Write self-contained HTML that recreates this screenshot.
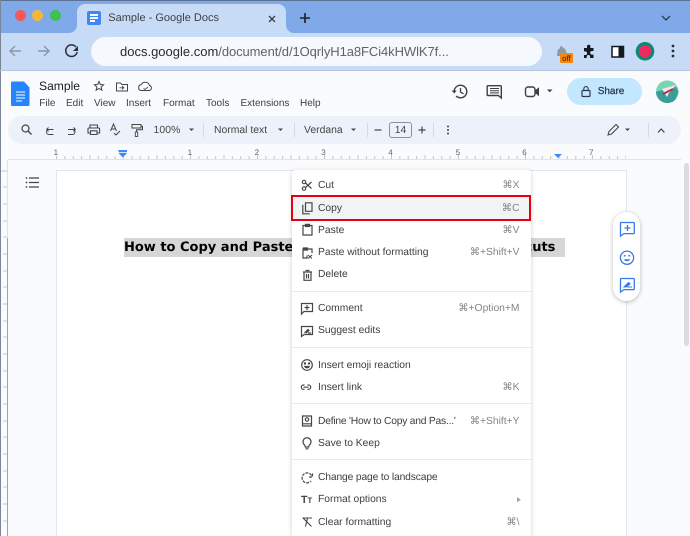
<!DOCTYPE html>
<html><head><meta charset="utf-8"><style>
html,body{margin:0;padding:0}
body{width:690px;height:536px;overflow:hidden;position:relative;background:#f9fbfd;font-family:"Liberation Sans",sans-serif;color:#202124;text-rendering:geometricPrecision}
#w{position:absolute;left:0;top:0;width:690px;height:536px;overflow:hidden;filter:blur(.3px)}
.a{position:absolute}
.t{position:absolute;white-space:nowrap}
svg{position:absolute;overflow:visible;left:0;top:0}
.m{position:absolute;left:318px;font-size:10.3px;color:#3c4043;white-space:nowrap;line-height:14px;margin-top:1.3px}
.k{position:absolute;right:170.5px;font-size:10.3px;color:#80868b;white-space:nowrap;line-height:14px;margin-top:1.3px}
.s{position:absolute;left:292px;width:239px;height:1px;background:#e8eaed}
.mi{fill:none;stroke:#444746;stroke-width:1.2}
.b{position:absolute;top:96.5px;font-size:10px;line-height:13px;color:#3c4043;white-space:nowrap}
.n{position:absolute;top:148px;font-size:8px;color:#5f6368}
.tb{position:absolute;z-index:1;top:124px;font-size:10.4px;line-height:14px;color:#444746;white-space:nowrap}
</style></head><body><div id="w">
<!-- tab strip -->
<div class="a" style="left:0;top:0;width:690px;height:33px;background:#7fa9e8"></div>
<div class="a" style="left:0;top:0;width:690px;height:1px;background:#5c7192"></div>
<div class="a" style="left:0;top:33px;width:690px;height:37px;background:#c8dbf6"></div>
<div class="a" style="left:0;top:0;width:1px;height:536px;background:#7a8598"></div>
<div class="a" style="left:77px;top:4px;width:209px;height:29px;background:#c8dbf6;border-radius:8px 8px 0 0"></div>
<div class="a" style="left:15px;top:10px;width:11px;height:11px;border-radius:50%;background:#f15a57"></div>
<div class="a" style="left:32px;top:10px;width:11px;height:11px;border-radius:50%;background:#f6b738"></div>
<div class="a" style="left:50px;top:10px;width:11px;height:11px;border-radius:50%;background:#3cc24f"></div>
<div class="a" style="left:87px;top:11px;width:14px;height:14px;border-radius:2px;background:#4285f4"></div>
<div class="a" style="left:90px;top:14px;width:8px;height:1.5px;background:#fff"></div>
<div class="a" style="left:90px;top:17px;width:8px;height:1.5px;background:#fff"></div>
<div class="a" style="left:90px;top:20px;width:5px;height:1.5px;background:#fff"></div>
<div class="t" style="left:108.3px;top:11px;font-size:11px;line-height:14px;color:#3c4043">Sample - Google Docs</div>
<svg width="690" height="70">
<path d="M69 33a8 8 0 0 0 8-8v8zM286 25a8 8 0 0 0 8 8h-8z" fill="#c8dbf6"/>
<path d="M269 16l6 6M275 16l-6 6" stroke="#3c4043" stroke-width="1.300" fill="none"/>
<path d="M305 13v10M300 18h10" stroke="#1f1f1f" stroke-width="1.600" fill="none"/>
<path d="M662 16l4 4 4-4" stroke="#2c3a50" stroke-width="1.300" fill="none"/>
<path d="M21 51H10M15 46l-5 5 5 5" stroke="#8a95a6" stroke-width="1.400" fill="none"/>
<path d="M38 51h11M44 46l5 5-5 5" stroke="#8a95a6" stroke-width="1.400" fill="none"/>
<path d="M76 47a5.800 5.800 0 1 0 1.200 5" stroke="#2a2f36" stroke-width="1.500" fill="none"/><path d="M78 46v5h-5z" fill="#2a2f36"/>
<rect x="103" y="50" width="7.500" height="6.500" rx="1" fill="#4a4f57"/><path d="M104.500 50v-1.500a2.300 2.300 0 0 1 4.600 0V50" stroke="#4a4f57" fill="none"/>
<circle cx="470" cy="51" r="4.300" fill="none" stroke="#4a4f57" stroke-width="1.200"/><path d="M473 54l3.500 3.500M468 51h4" stroke="#4a4f57" stroke-width="1.200" fill="none"/>
<path d="M498 50h-2v7.500h9V50h-2M500.500 53v-7.500M498.300 47.500l2.200-2.200 2.200 2.200" stroke="#4a4f57" stroke-width="1.100" fill="none"/>
<path d="M526.500 46l1.500 3.600 3.800.3-2.900 2.500.9 3.700-3.300-2-3.300 2 .9-3.700-2.900-2.500 3.800-.3z" stroke="#3c4043" stroke-width="1.100" fill="none"/>
<path d="M557 56l.5-6 2-1.500 1.500-3 2 2 2 1.500 1.500 3v4z" fill="#8f98a6"/>
<path d="M584 48h3v-1.500a1.700 1.700 0 0 1 3.400 0V48h3.100v3h-1.500a1.800 1.800 0 0 0 0 3.600h1.500v3.400h-3.400v-1.300a1.700 1.700 0 0 0-3.400 0V58H584v-3h1.300a1.800 1.800 0 0 0 0-3.600H584z" fill="#14181f"/>
<rect x="612" y="46.500" width="11.500" height="10.500" fill="#fff" stroke="#14181f" stroke-width="1.500"/><rect x="618.500" y="46.500" width="5" height="10.500" fill="#14181f"/>
<circle cx="645" cy="51.300" r="9.300" fill="#0c8a75"/><circle cx="645" cy="51.300" r="6.200" fill="#ee2a5f"/>
<circle cx="673" cy="46" r="1.400" fill="#2a2f36"/><circle cx="673" cy="51" r="1.400" fill="#2a2f36"/><circle cx="673" cy="56" r="1.400" fill="#2a2f36"/>
</svg>
<div class="a" style="left:560px;top:53px;width:13px;height:10px;background:#f6860c;border-radius:1px;font-size:8px;line-height:11px;text-align:center;color:#33240c">off</div>
<!-- omnibox -->
<div class="a" style="left:91px;top:37px;width:451px;height:29px;border-radius:15px;background:#f5f8fd"></div>
<div class="t" style="left:120px;top:44px;font-size:13px;line-height:16px;color:#5f6368"><span style="color:#26292e">docs.google.com</span><span style="letter-spacing:-.08px">/document/d/1OqrlyH1a8FCi4kHWlK7f...</span></div>
<div class="a" style="left:0;top:70px;width:690px;height:1px;background:#b6c3d8"></div>
<!-- header -->
<div class="a" style="left:1px;top:71px;width:689px;height:465px;background:#f9fbfd"></div>
<svg width="690" height="160">
<path d="M12 81.500h12l5.500 6v17.500a1 1 0 0 1-1 1H12a1 1 0 0 1-1-1v-22.500a1 1 0 0 1 1-1z" fill="#2684fc"/>
<path d="M16 92h9M16 95h9M16 98h9M16 101h6" stroke="#fff" stroke-width="1" fill="none"/>
<path d="M99 81.500l1.300 3 3.300.3-2.500 2.200.8 3.200-2.900-1.700-2.900 1.700.8-3.200-2.500-2.200 3.300-.3z" fill="none" stroke="#444746" stroke-width="1"/>
<path d="M116.500 83h4l1.500 1.500h5.500v6.500h-11z" fill="none" stroke="#444746" stroke-width="1"/><path d="M119.500 87.800h4M122 86l1.800 1.800-1.800 1.800" stroke="#444746" stroke-width=".9" fill="none"/>
<path d="M141 90.500a3 3 0 0 1 .2-5.900 4.500 4.500 0 0 1 8.300.9 2.600 2.600 0 0 1 0 5h-8.500z" fill="none" stroke="#444746" stroke-width="1"/><path d="M143.500 88.500l1.500 1 3-2.500" stroke="#444746" stroke-width=".9" fill="none"/>
<path d="M454.200 91.500a6.300 6.300 0 1 1 1.900 4.500" stroke="#3c4043" stroke-width="1.400" fill="none"/><path d="M451.700 90.500h5l-2.500 3z" fill="#3c4043"/><path d="M460.500 88v4l3 1.800" stroke="#3c4043" stroke-width="1.300" fill="none"/>
<path d="M488 85.700h12.500a.8.800 0 0 1 .8.800V98l-3-2.500H488a.8.800 0 0 1-.8-.8v-8.200a.8.800 0 0 1 .8-.8z" stroke="#3c4043" stroke-width="1.400" fill="none"/><path d="M490 88.500h9M490 90.700h9M490 92.900h9" stroke="#3c4043" stroke-width="1"/>
<rect x="525.500" y="87" width="9.500" height="9.500" rx="2.500" fill="none" stroke="#3c4043" stroke-width="1.400"/><path d="M535 90.500l4-3.300v9l-4-3.300z" fill="#3c4043"/>
<path d="M547 89.500h5.500l-2.750 2.700z" fill="#3c4043"/>
<circle cx="667.300" cy="91.700" r="11.300" fill="#7bd4b4"/><path d="M656 91.700a11.300 11.300 0 0 0 19.500 7.800l3-8-3-5z" fill="#3a9c9b"/><path d="M662 89l14-4-7 8-2 4z" fill="#f3e7ea"/><path d="M663 94l10-5" stroke="#c42b3a" stroke-width="2"/>
</svg>
<div class="t" style="left:39px;top:77.5px;font-size:12.1px;line-height:16px;color:#1f1f1f">Sample</div>
<div class="b" style="left:39.300px">File</div>
<div class="b" style="left:66px">Edit</div>
<div class="b" style="left:94px">View</div>
<div class="b" style="left:126px">Insert</div>
<div class="b" style="left:163px">Format</div>
<div class="b" style="left:206px">Tools</div>
<div class="b" style="left:240.500px">Extensions</div>
<div class="b" style="left:300px">Help</div>
<!-- share -->
<div class="a" style="left:567px;top:78px;width:75px;height:27px;border-radius:14px;background:#c2e7ff"></div>
<svg width="690" height="110"><rect x="582" y="90.500" width="8" height="6" rx="1" fill="none" stroke="#2c3a4b" stroke-width="1.200"/><path d="M583.800 90.500v-1.700a2.200 2.200 0 0 1 4.400 0v1.700" stroke="#2c3a4b" stroke-width="1.100" fill="none"/></svg>
<div class="t" style="left:597.700px;top:84.500px;font-size:10px;line-height:13px;-webkit-text-stroke:.25px #26384a;color:#26384a">Share</div>
<!-- toolbar -->
<div class="a" style="left:8px;top:116px;width:673px;height:28px;border-radius:14px;background:#edf2fa"></div>
<svg style="z-index:1" width="690" height="160">
<path d="M28 131l3.500 3.500" stroke="#444746" stroke-width="1.400"/><circle cx="25.500" cy="128.500" r="3.500" fill="none" stroke="#444746" stroke-width="1.200"/>
<path d="M53.500 134.500h-4.500a2.500 2.500 0 0 1 0-5h4.500M46.500 129.500h3M46.500 129.500l2-2M46.500 129.500l2 2" stroke="#444746" stroke-width="1" fill="none"/>
<path d="M68 134.500h4.500a2.500 2.500 0 0 0 0-5H68M75.500 129.500h-3M75.500 129.500l-2-2M75.500 129.500l-2 2" stroke="#444746" stroke-width="1" fill="none"/>
<path d="M90.500 133H88v-4.200a.8.800 0 0 1 .8-.8h10a.8.800 0 0 1 .8.800V133h-2.500M90 128v-3h7.500v3M90.500 130.800h6.500v3.700h-6.500z" stroke="#444746" stroke-width="1.100" fill="none"/>
<path d="M110.500 131l3-7 3 7M111.600 129h3.800M114 133l2 2 4-4" stroke="#444746" stroke-width="1" fill="none"/>
<path d="M132 124.500h9v3.500h-9zM141 126.300h1.500v3.500h-6v2" stroke="#444746" stroke-width="1" fill="none"/><rect x="135.300" y="132" width="2.400" height="4.500" fill="none" stroke="#444746" stroke-width=".9"/>
<path d="M189 128.500h5l-2.500 2.500zM278 128.500h5l-2.500 2.500zM351 128.500h5l-2.500 2.500zM625 128.500h5l-2.500 2.500z" fill="#444746"/>
<path d="M203.500 123v14M367.500 123v14M433.500 123v14M648.500 123v14M294.500 123v14" stroke="#d5dae2" stroke-width="1"/>
<path d="M374.500 130h7" stroke="#444746" stroke-width="1.200"/><path d="M418.500 130h7M422 126.500v7" stroke="#444746" stroke-width="1.200"/>
<circle cx="448" cy="126.500" r="1" fill="#444746"/><circle cx="448" cy="130" r="1" fill="#444746"/><circle cx="448" cy="133.500" r="1" fill="#444746"/>
<path d="M608 135l1-3.500 7-7 2.500 2.500-7 7z" fill="none" stroke="#444746" stroke-width="1.100"/>
<path d="M658 132.500l3.200-3.500 3.200 3.500" stroke="#444746" stroke-width="1.200" fill="none"/>
</svg>
<div class="tb" style="left:153.500px;letter-spacing:.1px">100%</div>
<div class="tb" style="left:214px">Normal text</div>
<div class="tb" style="left:304px">Verdana</div>
<div class="a" style="z-index:1;left:389px;top:122px;width:21px;height:14px;border:1px solid #8c9097;border-radius:3px;font-size:10.3px;line-height:15px;text-align:center;color:#444746">14</div>
<!-- ruler -->
<div class="a" style="left:8px;top:159px;width:673px;height:1px;background:#dfe3e8"></div>
<svg width="690" height="160">
<path d="M56 157.500H626" stroke="#c2c5c9" stroke-width="3" stroke-dasharray="1 7.375" fill="none"/>
<path d="M89.500 157H626" stroke="#c2c5c9" stroke-width="4" stroke-dasharray="1 32.500" fill="none"/>
<path d="M118.500 150h8.500v2.200h-8.500z" fill="#4285f4"/><path d="M118.500 153h8.500l-4.250 4.500z" fill="#4285f4"/>
<path d="M554 154h8l-4 4z" fill="#4285f4"/>
</svg>
<div class="n" style="left:53.600px">1</div><div class="n" style="left:187.600px">1</div><div class="n" style="left:254.600px">2</div><div class="n" style="left:321.200px">3</div><div class="n" style="left:388.200px">4</div><div class="n" style="left:455.600px">5</div><div class="n" style="left:522.200px">6</div><div class="n" style="left:589px">7</div>
<!-- left ruler -->
<div class="a" style="left:7px;top:160px;width:1px;height:376px;background:#dfe3e8"></div>
<svg width="10" height="536"><path d="M1 171h6M3 187h4M3 204h4M3 221h4M3 237h4M3 254h4M3 271h4M3 287h4M3 304h4M3 321h4M3 337h4M3 354h4M3 371h4M3 387h4M3 404h4M3 421h4M3 437h4M3 454h4M3 471h4M3 487h4M3 504h4M3 521h4" stroke="#c4c8cc"/><path d="M7.500 238v298" stroke="#a0a4aa"/></svg>
<!-- outline icon -->
<svg width="60" height="200"><path d="M29 178h10M29 182.500h10M29 187h10" stroke="#444746" stroke-width="1.300"/><circle cx="26.500" cy="178" r=".9" fill="#444746"/><circle cx="26.500" cy="182.500" r=".9" fill="#444746"/><circle cx="26.500" cy="187" r=".9" fill="#444746"/></svg>
<!-- page -->
<div class="a" style="left:57px;top:171px;width:569px;height:365px;background:#fff;box-shadow:0 0 0 1px #e3e6ea"></div>
<div class="a" style="left:124px;top:238px;width:441px;height:18.500px;background:#d6d6d6"></div>
<div class="t" style="left:124px;top:238.500px;font-family:'DejaVu Sans',sans-serif;font-weight:700;font-size:13px;line-height:18px;color:#000">How to Copy and Paste</div>
<div class="t" style="left:524.500px;top:238.500px;font-family:'DejaVu Sans',sans-serif;font-weight:700;font-size:13px;line-height:18px;color:#000">cuts</div>
<!-- side pill -->
<div class="a" style="left:613px;top:212px;width:27px;height:89px;border-radius:14px;background:#fff;box-shadow:0 1px 4px rgba(60,64,67,.35)"></div>
<svg width="690" height="310">
<path d="M621 222.500h12.500a.8.800 0 0 1 .8.800v9.500a.8.800 0 0 1-.8.800H624l-3.500 2.500v-12.800a.8.800 0 0 1 .5-.8z" fill="none" stroke="#3b78e7" stroke-width="1.300"/><path d="M627.500 225v6M624.500 228h6" stroke="#3b78e7" stroke-width="1.300"/>
<circle cx="627" cy="257.700" r="6.600" fill="none" stroke="#3b78e7" stroke-width="1.300"/><circle cx="624.800" cy="255.800" r=".9" fill="#3b78e7"/><circle cx="629.200" cy="255.800" r=".9" fill="#3b78e7"/><path d="M623.800 259.300a3.600 3.600 0 0 0 6.400 0z" fill="#3b78e7"/>
<path d="M621 278.500h12.500a.8.800 0 0 1 .8.800v9.500a.8.800 0 0 1-.8.800H624l-3.500 2.500v-12.800a.8.800 0 0 1 .5-.8z" fill="none" stroke="#3b78e7" stroke-width="1.300"/><path d="M624 287l4.500-4.500 1.500 1.500-4 3zM627 287h5" stroke="#3b78e7" stroke-width="1.100" fill="#3b78e7"/>
</svg>
<!-- scrollbar -->
<div class="a" style="left:684px;top:163px;width:5px;height:183px;border-radius:3px;background:#dadce0"></div>
<!-- menu -->
<div class="a" style="left:292px;top:170px;width:239px;height:366px;background:#fff;box-shadow:0 1px 5px rgba(60,64,67,.25);border-radius:3px 3px 0 0"></div>
<div class="a" style="left:291px;top:195px;width:240px;height:26px;background:#f1f3f4;box-sizing:border-box;border:2.500px solid #e8000f"></div>
<div class="s" style="top:291px"></div><div class="s" style="top:347px"></div><div class="s" style="top:403px"></div><div class="s" style="top:459px"></div>
<div class="m" style="top:178px">Cut</div><div class="k" style="top:178px">⌘X</div>
<div class="m" style="top:201px">Copy</div><div class="k" style="top:201px">⌘C</div>
<div class="m" style="top:223px">Paste</div><div class="k" style="top:223px">⌘V</div>
<div class="m" style="top:245px">Paste without formatting</div><div class="k" style="top:245px">⌘+Shift+V</div>
<div class="m" style="top:267px">Delete</div>
<div class="m" style="top:301px">Comment</div><div class="k" style="top:301px">⌘+Option+M</div>
<div class="m" style="top:323px">Suggest edits</div>
<div class="m" style="top:357.500px">Insert emoji reaction</div>
<div class="m" style="top:380px">Insert link</div><div class="k" style="top:380px">⌘K</div>
<div class="m" style="top:414px;letter-spacing:-.23px">Define 'How to Copy and Pas...'</div><div class="k" style="top:414px">⌘+Shift+Y</div>
<div class="m" style="top:436px">Save to Keep</div>
<div class="m" style="top:470px;letter-spacing:-.15px">Change page to landscape</div>
<div class="m" style="top:492px">Format options</div>
<div class="m" style="top:514.500px">Clear formatting</div><div class="k" style="top:514.500px">⌘\</div>
<svg width="690" height="536">
<g class="mi">
<circle cx="304" cy="182" r="1.700"/><circle cx="304" cy="188.500" r="1.700"/><path d="M305.500 183l6 5.500M305.500 187.500l6-5.500"/>
<path d="M305.500 202.800h6.500v8.500h-6.500z"/><path d="M302.800 204.800v9h7"/>
<path d="M303 225.500h9v9.500h-9z"/><path d="M305.500 224.300h4v2.200h-4z" fill="#444746"/>
<path d="M307 249h5v4M307 255.500v2.500h-4v-9h2.500"/><path d="M303.500 248h4v2h-4z" fill="#444746"/><path d="M308 255l4 3.500M312 255l-4 3.500" stroke-width="1"/>
<path d="M304 272h7v8.300h-7zM303 272h9M305.500 270.500h4M306.500 274v4.500M308.500 274v4.500"/>
<path d="M301.500 303.500h11v8h-8.500l-2.500 2.500z"/><path d="M307 305v5M304.500 307.500h5"/>
<path d="M301.500 326.500h11v8h-8.500l-2.500 2z"/><path d="M304.500 333l3.500-3.500 1 1-3 2.500M308 333h3" fill="#444746"/>
<circle cx="307" cy="365" r="5.300"/><path d="M304.800 366.500a2.500 2.500 0 0 0 4.400 0z" fill="#444746"/><circle cx="305" cy="363.500" r=".6" fill="#444746"/><circle cx="309" cy="363.500" r=".6" fill="#444746"/>
<path d="M304.500 385h-1a2.200 2.200 0 0 0 0 4.400h1M307.500 385h1a2.200 2.200 0 0 1 0 4.400h-1M303.500 387.200h5"/>
<path d="M302.500 416h9v10h-9zM302.500 423.800h9"/><circle cx="307" cy="419.500" r="1.700"/>
<path d="M304.700 445a4 4 0 1 1 4.600 0l-.6 2h-3.400zM305.500 448.800h3"/>
<path d="M311.500 475.500a5 5 0 1 0-.5 5.500M309 477h3.500v-3.500" stroke-dasharray="3 1"/>
</g>
<path d="M517 497l4 2.700-4 2.700z" fill="#a6a9ad"/>
<path d="M302.500 518h9.500M307.500 518l-2 8.500M303 518l8.500 8.500" stroke="#444746" stroke-width="1.100" fill="none"/>
</svg>
<div class="t" style="left:301px;top:492.500px;font-size:10.500px;line-height:14px;color:#444746;font-weight:700">T<span style="font-size:8px">T</span></div>
</div></body></html>
